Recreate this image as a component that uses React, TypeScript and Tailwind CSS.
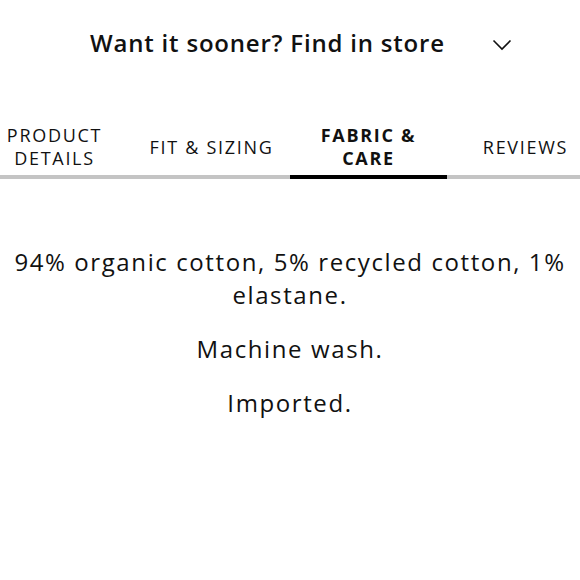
import { useState } from "react";

const tabs = ["PRODUCT DETAILS", "FIT & SIZING", "FABRIC & CARE", "REVIEWS"];

const care = [
  "94% organic cotton, 5% recycled cotton, 1% elastane.",
  "Machine wash.",
  "Imported.",
];

export default function App() {
  const [active, setActive] = useState(2);

  return (
    <div className="w-[580px] h-[580px] bg-white text-[#111] overflow-hidden font-['Open_Sans',sans-serif]">
      <button className="w-full h-[85px] flex items-center pl-[90px] pr-[68px] justify-between">
        <span className="text-[24px] font-semibold tracking-[0.8px]">Want it sooner? Find in store</span>
        <svg width="20" height="12" viewBox="0 0 20 12" fill="none" className="mt-[5px]">
          <path d="M1.5 1.5 L10 10 L18.5 1.5" stroke="#111" strokeWidth="1.6" />
        </svg>
      </button>

      <div className="mt-[35px] overflow-hidden">
        <div className="flex -ml-[24px] w-[628px]">
          {tabs.map((t, i) => (
            <button
              key={t}
              onClick={() => setActive(i)}
              className={
                "w-[157px] shrink-0 h-[59px] pb-[1px] flex items-center justify-center text-center text-[18px] leading-[23px] tracking-[1.7px] px-[6px] border-b-4 " +
                (i === active ? "font-bold border-black" : "border-[#c4c4c4]")
              }
            >
              {t}
            </button>
          ))}
        </div>
      </div>

      <div className="mt-[66px] px-[2px] flex flex-col gap-[21px] text-center text-[24px] leading-[33px] tracking-[1.6px]">
        {care.map((c) => (
          <p key={c}>{c}</p>
        ))}
      </div>
    </div>
  );
}
